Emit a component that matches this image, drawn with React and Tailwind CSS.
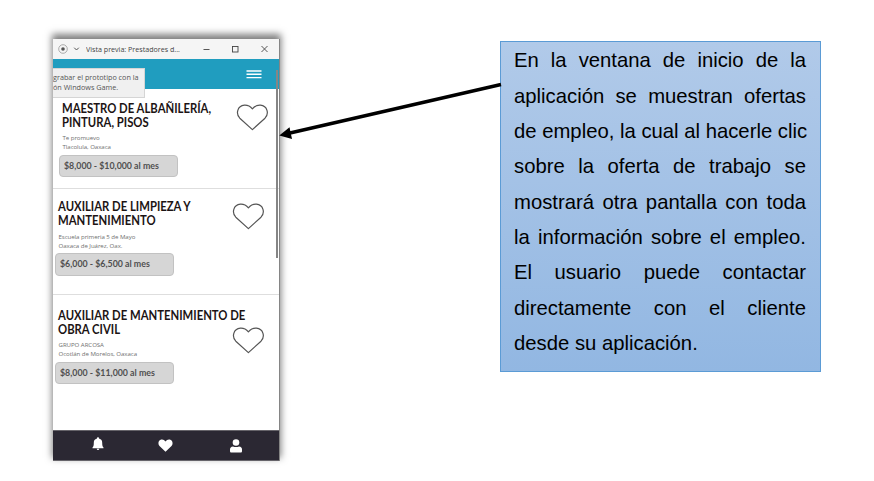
const HEART = 'M16 25.6 L3.4 14.2 C-0.8 10 0.8 1.8 8 1.2 C11.5 1 14 2.4 16 4.8 C18 2.4 20.5 1 24 1.2 C31.2 1.8 32.8 10 28.6 14.2 Z';

const jobs = [
  {
    title: ['MAESTRO DE ALBAÑILERÍA,', 'PINTURA, PISOS'],
    company: 'Te promuevo',
    place: 'Tlacolula, Oaxaca',
    pay: '$8,000 - $10,000 al mes',
    card: 'h-[100px] pt-[12.5px] pl-1.5',
    heart: 'top-[15px] left-[183px]',
  },
  {
    title: ['AUXILIAR DE LIMPIEZA Y', 'MANTENIMIENTO'],
    company: 'Escuela primeria 5 de Mayo',
    place: 'Oaxaca de Juárez, Oax.',
    pay: '$6,000 - $6,500 al mes',
    card: 'h-[106px] pt-[11px] pl-0.5',
    heart: 'top-[14px] left-[179px]',
  },
  {
    title: ['AUXILIAR DE MANTENIMIENTO DE', 'OBRA CIVIL'],
    company: 'GRUPO ARCOSA',
    place: 'Ocotlán de Morelos, Oaxaca',
    pay: '$8,000 - $11,000 al mes',
    card: 'h-[135px] pt-[13.5px] pl-0.5',
    heart: 'top-[32px] left-[179px]',
  },
];

const lines = [
  'En la ventana de inicio de la',
  'aplicación se muestran ofertas',
  'de empleo, la cual al hacerle clic',
  'sobre la oferta de trabajo se',
  'mostrará otra pantalla con toda',
  'la información sobre el empleo.',
  'El usuario puede contactar',
  'directamente con el cliente',
];

function TitleBar() {
  return (
    <div className="flex h-5 shrink-0 items-center bg-[#f5f5f5] pl-[5px] text-[#444]">
      <svg width="10" height="10" viewBox="0 0 10 10" fill="none" stroke="#999" strokeWidth="0.8">
        <circle cx="5" cy="5" r="4.3" />
        <circle cx="5" cy="5" r="1.8" fill="#555" stroke="none" />
      </svg>
      <svg className="ml-[5px]" width="7" height="6" viewBox="0 0 7 6" fill="none" stroke="#555">
        <path d="M1.2 1.7 L3.5 4 L5.8 1.7" />
      </svg>
      <span className="ml-1.5 w-[117px] origin-left scale-x-[0.89] font-['Open_Sans',sans-serif] text-[8px] leading-5 whitespace-nowrap">
        Vista previa: Prestadores d...
      </span>
      <svg width="66" height="8" viewBox="0 0 66 8" fill="none" stroke="#444" strokeWidth="0.9">
        <path d="M0.5 4.5 H6.5 M58.5 1 L64.5 7 M64.5 1 L58.5 7" />
        <rect x="29.5" y="1.5" width="5.5" height="5.5" />
      </svg>
    </div>
  );
}

function JobCard({ job }) {
  return (
    <article className={`relative shrink-0 border-b border-[#dedede] last:border-b-0 ${job.card}`}>
      <h2 className="ml-[3.2px] origin-left scale-x-[0.92] font-[Lato,sans-serif] text-[12.3px] leading-[14px] font-bold whitespace-nowrap text-[#1c1414]">
        {job.title.map((t) => (
          <span className="block" key={t}>{t}</span>
        ))}
      </h2>
      <p className="mt-[3.5px] pl-[3.5px] font-['Open_Sans',sans-serif] text-[6.1px] leading-[9px] tracking-[-0.05px] whitespace-nowrap text-[#707070]">
        <span className="block">{job.company}</span>
        <span className="block">{job.place}</span>
      </p>
      <div className="mt-[3.5px] flex h-[22.5px] w-[119px] items-center rounded-[4px] border border-[#c2c2c2] bg-[#d6d6d6] pl-1 text-[#505050]">
        <span className="origin-left scale-x-[0.96] font-[Lato,sans-serif] text-[9.2px] leading-[14px] font-bold whitespace-nowrap">
          {job.pay}
        </span>
      </div>
      <svg className={`absolute ${job.heart}`} width="32" height="27" viewBox="-0.4 0 32 27" fill="none" stroke="#555" strokeWidth="1.2" strokeLinejoin="round">
        <path d={HEART} />
      </svg>
    </article>
  );
}

function NavBar() {
  return (
    <nav className="flex h-[31px] shrink-0 items-center border-y border-[#66646a] bg-[#2b2833] text-white">
      <svg className="mb-1 ml-[39px]" width="12" height="14" viewBox="0 0 12 14" fill="currentColor">
        <path d="M6 0.3 C6.7 0.3 7 0.8 7 1.4 C9.4 2 10.2 3.6 10.2 5.8 C10.2 8.5 10.5 9.4 11.5 10.5 V11.2 H0.5 V10.5 C1.5 9.4 1.8 8.5 1.8 5.8 C1.8 3.6 2.6 2 5 1.4 C5 0.8 5.3 0.3 6 0.3 Z M4.7 11.8 H7.3 C7.1 13.4 4.9 13.4 4.7 11.8 Z" />
      </svg>
      <svg className="ml-[54px]" width="15" height="13" viewBox="0 0 15 13" fill="currentColor">
        <path d="M7.5 12.7 L1.5 7 C-0.2 5.2 0.2 2 2.2 1 C4.2 -0.1 6.2 0.7 7.5 2.6 C8.8 0.7 10.8 -0.1 12.8 1 C14.8 2 15.2 5.2 13.5 7 Z" />
      </svg>
      <svg className="ml-[57px]" width="12" height="14" viewBox="0 0 12 14" fill="currentColor">
        <circle cx="6" cy="3.5" r="3.3" />
        <path d="M3 7.4 C4.5 8.3 7.5 8.3 9 7.4 C11 7.4 12 8.7 12 10.5 V12 C12 13.2 11.5 13.6 10.5 13.6 H1.5 C0.5 13.6 0 13.2 0 12 V10.5 C0 8.7 1 7.4 3 7.4 Z" />
      </svg>
    </nav>
  );
}

export default function App() {
  return (
    <main className="relative flex h-[481px] w-[874px] items-start overflow-hidden bg-white">
      <section className="relative mt-[39px] ml-[53px] flex h-[422px] w-[227px] shrink-0 flex-col border-r border-[#858585] bg-white shadow-[0_-4px_7px_1px_rgba(0,0,0,0.5)]">
        <TitleBar />
        <header className="flex h-[30px] shrink-0 justify-end bg-[#209dbf] pt-[11px] pr-[17px]">
          <svg width="16" height="9" viewBox="0 0 16 9" stroke="white" strokeWidth="1.4">
            <path d="M0.5 1 H15.5 M0.5 4.3 H15.5 M0.5 7.6 H15.5" />
          </svg>
        </header>
        <div className="flex flex-1 flex-col">
          {jobs.map((job) => (
            <JobCard job={job} key={job.title[0]} />
          ))}
        </div>
        <NavBar />
        <div className="absolute top-[29px] left-0 h-[30px] w-[92px] border border-l-0 border-[#d5d5d5] bg-[#f0f0f0] pt-[3px] text-[#555]">
          <p className="origin-left scale-x-[0.94] font-['Open_Sans',sans-serif] text-[7.7px] leading-[10px] whitespace-nowrap">
            <span className="block">grabar el prototipo con la</span>
            <span className="block">ón Windows Game.</span>
          </p>
        </div>
        <div className="absolute top-[31px] right-px h-[188px] w-[2px] bg-[#858585]" />
      </section>
      <aside className="mt-[41px] ml-[220px] h-[331px] w-[321px] shrink-0 border border-[#5b9bd5] bg-linear-to-b from-[#b1cae9] to-[#92b7e2] pt-[1.2px] pr-[14px] pl-[13px] font-['Liberation_Sans',Arial,sans-serif] text-[20.3px] leading-[35.35px] whitespace-nowrap text-black">
        {lines.map((l) => (
          <span className="block [text-align-last:justify]" key={l}>{l}</span>
        ))}
        <span className="block">desde su aplicación.</span>
      </aside>
      <svg className="pointer-events-none absolute top-[70px] left-[270px]" width="240" height="80" viewBox="0 0 240 80">
        <path d="M231 14.5 L20 63" stroke="black" strokeWidth="3.4" />
        <path d="M9.3 65.5 L19.5 57.3 L22 68.9 Z" fill="black" />
      </svg>
    </main>
  );
}
